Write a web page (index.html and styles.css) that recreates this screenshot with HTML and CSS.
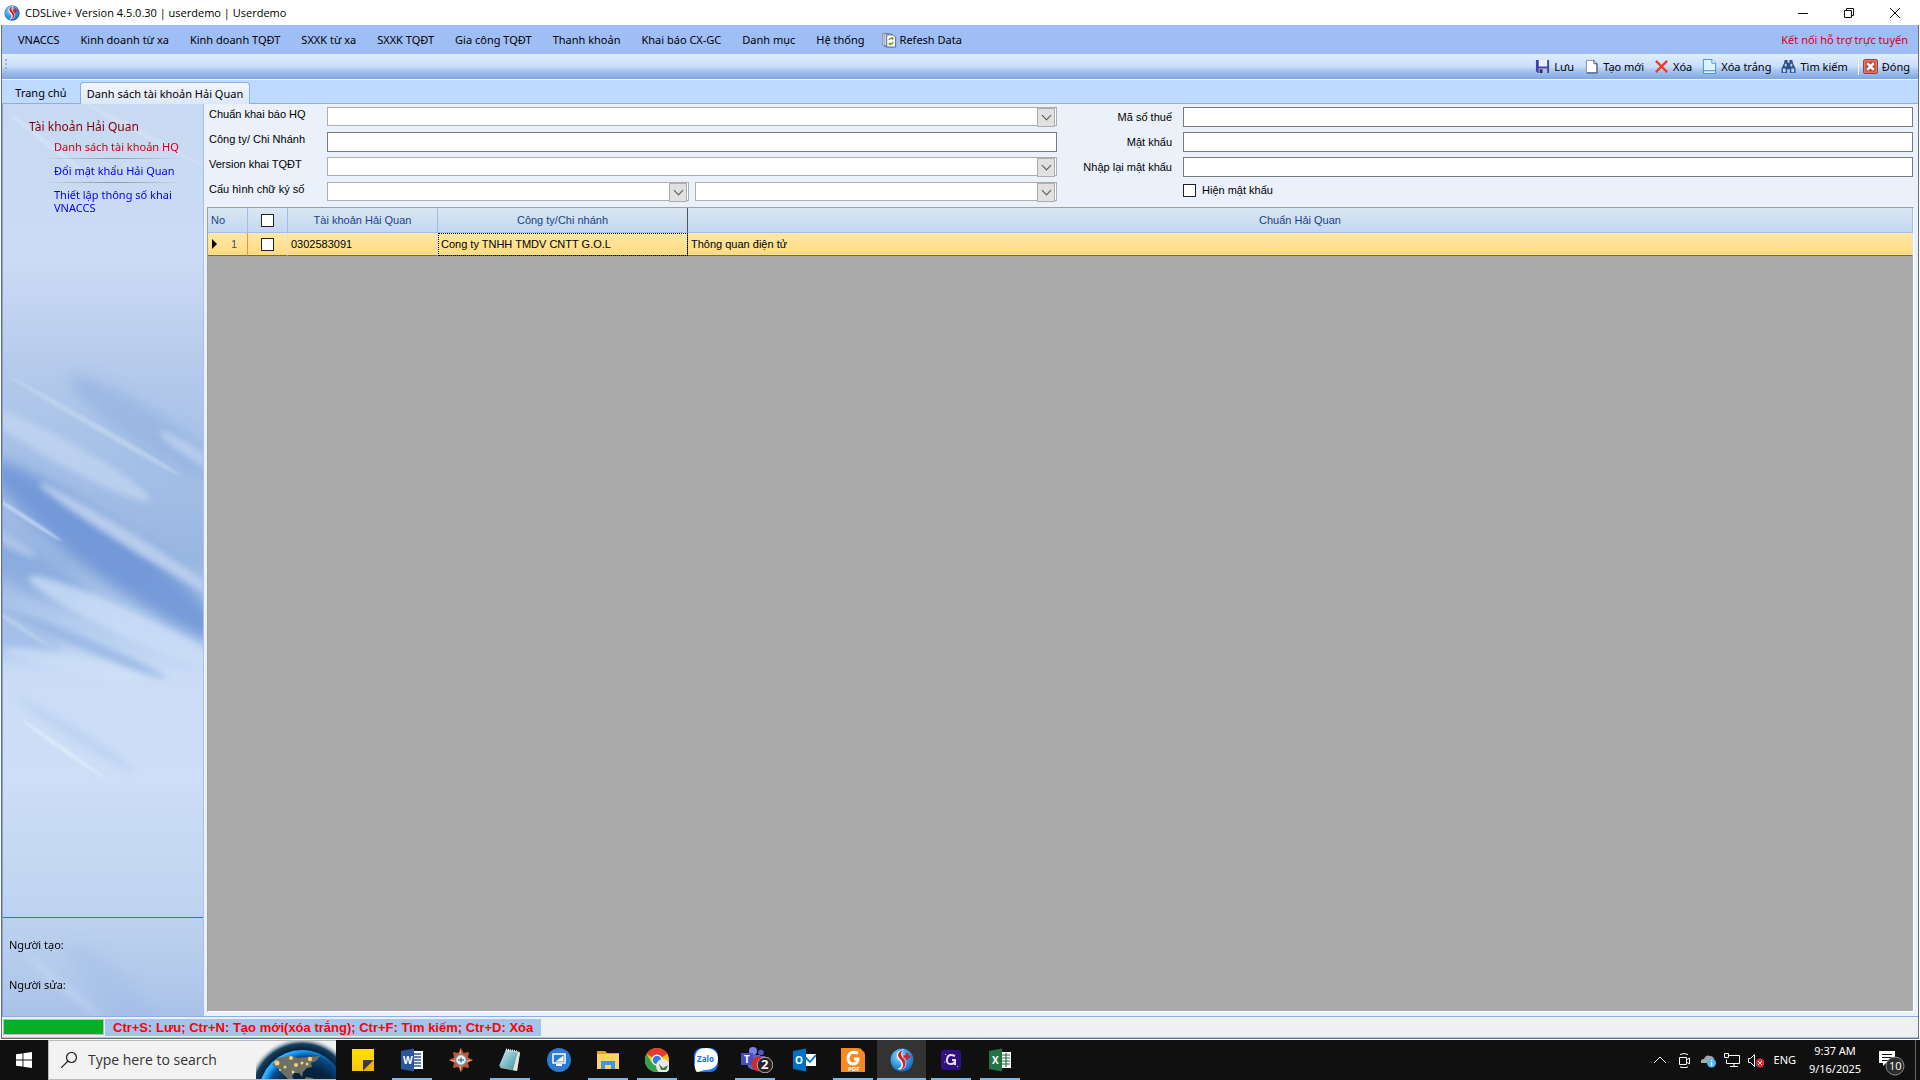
FILE: index.html
```html
<!DOCTYPE html>
<html lang="vi">
<head>
<meta charset="utf-8">
<title>CDSLive+ Version 4.5.0.30</title>
<link rel="stylesheet" href="styles.css">
</head>
<body>
<svg class="defs" aria-hidden="true">
  <defs>
    <radialGradient id="logoBlue" cx=".4" cy=".35" r=".7"><stop offset="0" stop-color="#9bdcf8"/><stop offset=".6" stop-color="#2e97dd"/><stop offset="1" stop-color="#145fae"/></radialGradient>
    <linearGradient id="glass" x1="0" y1="0" x2="1" y2="1"><stop offset="0" stop-color="#d7f1f2"/><stop offset="1" stop-color="#2f8fa3"/></linearGradient>
    <linearGradient id="sticky" x1="0" y1="0" x2="0" y2="1"><stop offset="0" stop-color="#ffe000"/><stop offset="1" stop-color="#fdc80f"/></linearGradient>
    <symbol id="logo" viewBox="0 0 24 24">
      <circle cx="12" cy="12" r="11.5" fill="url(#logoBlue)"/>
      <path d="M14 1C6 3 5 8 9 12c4 4 3 8-2 9 8 2 11-4 8-9-3-4-4-7-1-11z" fill="#fff"/>
      <path d="M13 2C7 4 7 8 10 11c4 4 4 8 0 11 6-2 7-7 4-11-3-3-4-6-1-9z" fill="#d3202e"/>
      <path d="M17 5v7M13.500 8.500h7" stroke="#d3202e" stroke-width="2.400"/>
    </symbol>
  </defs>
</svg>
<div class="app">
  <header class="titlebar">
    <svg class="icon16"><use href="#logo"/></svg>
    <h1>CDSLive+ Version 4.5.0.30 | userdemo | Userdemo</h1>
    <div class="winbtns">
      <button aria-label="Minimize"><svg viewBox="0 0 12 12"><path d="M1 6.500h10" /></svg></button>
      <button aria-label="Restore"><svg viewBox="0 0 12 12"><path d="M1.500 3.500h7v7h-7zM3.500 3.500v-2h7v7h-2"/></svg></button>
      <button aria-label="Close"><svg viewBox="0 0 12 12"><path d="M1 1l10 10M11 1L1 11"/></svg></button>
    </div>
  </header>
  <div class="frame">
    <nav class="menu">
      <button>VNACCS</button><button>Kinh doanh từ xa</button><button>Kinh doanh TQĐT</button><button>SXXK từ xa</button><button>SXXK TQĐT</button><button>Gia công TQĐT</button><button>Thanh khoản</button><button>Khai báo CX-GC</button><button>Danh mục</button><button>Hệ thống</button>
      <button class="refresh"><svg viewBox="0 0 16 16"><path d="M1 1h6v13H1zM3 1.500h7V15H3z" fill="#eef1f6" stroke="#65758d" stroke-width=".8"/><path d="M5 2.500h7l2.500 2.500v10.500H5z" fill="#fff" stroke="#4e617c"/><path d="M7.500 8q1-2.500 4-1.500M12 10q-1 3-4 2" fill="none" stroke="#6aa21a" stroke-width="1.500"/><path d="M10.500 4.500l2.500 2-2.500 2zM9 10l-2.500 2L9 14z" fill="#6aa21a"/></svg>Refesh Data</button>
      <a class="support" href="#">Kết nối hỗ trợ trực tuyến</a>
    </nav>
    <div class="toolbar">
      <span class="grip"></span>
      <button><svg viewBox="0 0 16 16"><path d="M1 1h14v14H3l-2-2z" fill="#3c45ad"/><path d="M4 1h9v7H4z" fill="#e9effb"/><path d="M4 10h9v5H4z" fill="#b9bfd0"/><path d="M5 11h3v4H5z" fill="#24295f"/></svg>Lưu</button>
      <button><svg viewBox="0 0 16 16"><path d="M2.500 1.500h8l3 3v10h-11z" fill="#fff" stroke="#7e8fab"/><path d="M10.500 1v4h3.500v10H3" fill="none" stroke="#42536e"/></svg>Tạo mới</button>
      <button><svg viewBox="0 0 16 16"><path d="M2 2l12 12M14 2L2 14" stroke="#ef3a24" stroke-width="2.400"/></svg>Xóa</button>
      <button><svg viewBox="0 0 16 16"><path d="M1.500.500h9l4 4v11h-13z" fill="#dff1fd" stroke="#3d8fd1"/><path d="M10.500.500v4h4" fill="#fff" stroke="#3d8fd1"/><path d="M1.500 12.500h13" stroke="#2b86cf"/></svg>Xóa trắng</button>
      <button><svg viewBox="0 0 16 16"><path d="M4 1h3v3h2V1h3l1 4 2.500 5v5h-6v-4h-3v4h-6v-5L3 5z" fill="#2e4f86"/><path d="M2 10h3v4H2zM11 10h3v4h-3zM4 5h2v3H4zM10 5h2v3h-2z" fill="#c1d5f2"/></svg>Tìm kiếm</button>
      <span class="sep"></span>
      <button><svg viewBox="0 0 16 16"><rect x=".500" y=".500" width="15" height="15" rx="2" fill="#c8452f" stroke="#8c3b35"/><rect x="2" y="2" width="12" height="12" fill="none" stroke="#e79a8b"/><path d="M4.500 4.500l7 7M11.500 4.500l-7 7" stroke="#fff" stroke-width="2.600"/></svg>Đóng</button>
    </div>
    <div class="tabs" role="tablist">
      <button role="tab">Trang chủ</button>
      <button role="tab" class="active" aria-selected="true">Danh sách tài khoản Hải Quan</button>
    </div>
    <div class="work">
      <aside class="side">
        <svg class="streaks" viewBox="0 0 200 912" preserveAspectRatio="none" aria-hidden="true">
          <defs>
            <linearGradient id="sky" x1="0" y1="0" x2="0" y2="1"><stop offset="0" stop-color="#c8d9f2"/><stop offset=".17" stop-color="#cadbf4"/><stop offset=".28" stop-color="#b7cbec"/><stop offset=".36" stop-color="#a9c3e8"/><stop offset=".5" stop-color="#98b6e2"/><stop offset=".57" stop-color="#b4ccee"/><stop offset=".63" stop-color="#cbddf6"/><stop offset=".74" stop-color="#cddef6"/><stop offset=".87" stop-color="#c0d5f0"/><stop offset=".96" stop-color="#b3c9eb"/><stop offset="1" stop-color="#a9c2e8"/></linearGradient>
            <filter id="soft" filterUnits="userSpaceOnUse" x="-80" y="-80" width="360" height="1080"><feGaussianBlur stdDeviation="7"/></filter>
            <filter id="mid" filterUnits="userSpaceOnUse" x="-80" y="-80" width="360" height="1080"><feGaussianBlur stdDeviation="3"/></filter>
            <filter id="fine" filterUnits="userSpaceOnUse" x="-80" y="-80" width="360" height="1080"><feGaussianBlur stdDeviation="1"/></filter>
          </defs>
          <rect width="200" height="912" fill="url(#sky)"/>
          <g filter="url(#soft)">
            <ellipse cx="145" cy="325" rx="95" ry="18" transform="rotate(33 145 325)" fill="#8fafe0" opacity=".6"/>
            <ellipse cx="105" cy="448" rx="150" ry="24" transform="rotate(37 105 448)" fill="#6d93d6" opacity=".85"/>
            <ellipse cx="20" cy="465" rx="70" ry="18" transform="rotate(25 20 465)" fill="#84a7dd" opacity=".7"/>
            <ellipse cx="0" cy="530" rx="60" ry="16" transform="rotate(15 0 530)" fill="#9ab8e5" opacity=".7"/>
            <ellipse cx="110" cy="885" rx="60" ry="18" transform="rotate(45 110 885)" fill="#98b5e5" opacity=".3"/>
          </g>
          <g filter="url(#mid)">
            <ellipse cx="60" cy="348" rx="100" ry="12" transform="rotate(29 60 348)" fill="#c3d5f1" opacity=".75"/>
            <ellipse cx="125" cy="520" rx="110" ry="13" transform="rotate(25 125 520)" fill="#cbddf6" opacity=".8"/>
            <ellipse cx="80" cy="539" rx="90" ry="6" transform="rotate(23 80 539)" fill="#8dade0" opacity=".65"/>
            <ellipse cx="70" cy="560" rx="70" ry="8" transform="rotate(12 70 560)" fill="#d1e2f8" opacity=".6"/>
            <ellipse cx="125" cy="435" rx="105" ry="7" transform="rotate(32 125 435)" fill="#bfd2f0" opacity=".9"/>
            <ellipse cx="188" cy="348" rx="38" ry="6" transform="rotate(33 188 348)" fill="#bed1ef" opacity=".8"/>
            <ellipse cx="72" cy="630" rx="68" ry="6" transform="rotate(32 72 630)" fill="#b7cff0" opacity=".65"/>
            <ellipse cx="5" cy="437" rx="32" ry="5" transform="rotate(30 5 437)" fill="#c1d4f2" opacity=".6"/>
            <ellipse cx="60" cy="882" rx="50" ry="4" transform="rotate(40 60 882)" fill="#c9dbf6" opacity=".5"/>
          </g>
          <g filter="url(#fine)">
            <ellipse cx="92" cy="322" rx="98" ry="3" transform="rotate(30 92 322)" fill="#c3d5f1" opacity=".7"/>
            <ellipse cx="20" cy="412" rx="46" ry="2" transform="rotate(33 20 412)" fill="#c7daf4" opacity=".8"/>
            <ellipse cx="60" cy="645" rx="50" ry="2" transform="rotate(35 60 645)" fill="#e0edfa" opacity=".8"/>
            <ellipse cx="20" cy="525" rx="40" ry="2" transform="rotate(33 20 525)" fill="#bcd1f0" opacity=".7"/>
            <ellipse cx="45" cy="40" rx="50" ry="2" transform="rotate(38 45 40)" fill="#dde9f9" opacity=".6"/>
            <ellipse cx="140" cy="30" rx="70" ry="3" transform="rotate(28 140 30)" fill="#d8e5f8" opacity=".5"/>
          </g>
        </svg>
        <nav class="sidenav">
          <h2>Tài khoản Hải Quan</h2>
          <a class="current" href="#">Danh sách tài khoản HQ</a>
          <a href="#">Đổi mật khẩu Hải Quan</a>
          <a href="#">Thiết lập thông số khai VNACCS</a>
        </nav>
        <div class="audit"><p>Người tạo:</p><p>Người sửa:</p></div>
      </aside>
      <main class="main">
        <form class="form">
          <label for="std">Chuẩn khai báo HQ</label><span class="combo"><select id="std"></select></span>
          <label class="r" for="tax">Mã số thuế</label><input id="tax" type="text">
          <label for="com">Công ty/ Chi Nhánh</label><input id="com" type="text">
          <label class="r" for="pw">Mật khẩu</label><input id="pw" type="password">
          <label for="ver">Version khai TQĐT</label><span class="combo"><select id="ver"></select></span>
          <label class="r" for="pw2">Nhập lại mật khẩu</label><input id="pw2" type="password">
          <label for="sig">Cấu hình chữ ký số</label>
          <div class="pair"><span class="combo"><select id="sig"></select></span><span class="combo"><select aria-label="Chữ ký số"></select></span></div>
          <label class="check"><input type="checkbox">Hiện mật khẩu</label>
        </form>
        <div class="grid">
          <table>
            <colgroup><col class="c-no"><col class="c-chk"><col class="c-acc"><col class="c-com"><col></colgroup>
            <thead><tr><th class="no">No</th><th><input type="checkbox" aria-label="Chọn tất cả"></th><th>Tài khoản Hải Quan</th><th>Công ty/Chi nhánh</th><th>Chuẩn Hải Quan</th></tr></thead>
            <tbody><tr><td class="rowhead"><span><i></i>1</span></td><td class="chk"><input type="checkbox" aria-label="Chọn dòng 1"></td><td>0302583091</td><td class="focus">Cong ty TNHH TMDV CNTT G.O.L</td><td>Thông quan điện tử</td></tr></tbody>
          </table>
        </div>
      </main>
    </div>
    <footer class="status"><div class="progress"></div><strong>Ctr+S: Lưu; Ctr+N: Tạo mới(xóa trắng); Ctr+F: Tìm kiếm; Ctr+D: Xóa</strong></footer>
  </div>
</div>
<div class="taskbar">
  <button class="start" aria-label="Start"><svg viewBox="0 0 16 16"><path d="M0 2.300L6.500 1.400V7.600H0zM7.400 1.300L16 0v7.600H7.400zM0 8.400h6.500v6.200L0 13.700zM7.400 8.400H16V16l-8.600-1.200z" fill="#fff"/></svg></button>
  <div class="search">
    <svg class="lens" viewBox="0 0 16 16"><circle cx="10.500" cy="5.500" r="5" fill="none" stroke="#222" stroke-width="1.200"/><path d="M7 9L0 16" stroke="#222" stroke-width="1.200"/></svg>
    <input type="text" placeholder="Type here to search" aria-label="Type here to search">
    <svg class="earth" viewBox="0 0 80 38"><defs><radialGradient id="halo" gradientUnits="userSpaceOnUse" cx="46" cy="52" r="56"><stop offset=".78" stop-color="#05233b"/><stop offset=".88" stop-color="#16405f"/><stop offset="1" stop-color="#f2f2f2" stop-opacity="0"/></radialGradient><radialGradient id="sea" gradientUnits="userSpaceOnUse" cx="52" cy="56" r="48"><stop offset=".6" stop-color="#06243d"/><stop offset=".85" stop-color="#0a4c8c"/><stop offset=".95" stop-color="#1496f5"/><stop offset="1" stop-color="#32b0ff"/></radialGradient></defs>
      <circle cx="46" cy="52" r="56" fill="url(#halo)"/><circle cx="46" cy="52" r="43" fill="url(#sea)"/>
      <path d="M16 24l6-7 12-2 8 2 9-1 13-1-4 5-5 2 1 4-5 1-4 4-1 5-3-4h-5l-2 4 3 3-5 1-5-5-5-5-3-4z" fill="#6d7062"/><path d="M50 36l6 1 4 2H48z" fill="#6d7062"/>
      <g fill="#f8cf7b"><circle cx="21" cy="22" r="2.500"/><circle cx="35" cy="17" r="2"/><circle cx="29" cy="26" r="1.500"/><circle cx="40" cy="24" r="2"/><circle cx="46" cy="22" r="1.500"/><circle cx="54" cy="18" r="2.200"/><circle cx="51" cy="23" r="1.500"/><circle cx="37" cy="31" r="1.500"/><circle cx="24" cy="29" r="1"/></g></svg>
  </div>
  <div class="apps">
    <button aria-label="Sticky Notes"><svg viewBox="0 0 24 24"><path d="M1 1h22v22H1z" fill="url(#sticky)"/><path d="M12 23V12h11z" fill="#3e3c3a"/><path d="M12 23l11-11v11z" fill="#efb20b"/></svg></button>
    <button class="open" aria-label="Word"><svg viewBox="0 0 24 24"><path d="M12 3h11v18H12z" fill="#fff"/><path d="M14 6h7M14 9h7M14 12h7M14 15h7M14 18h7" stroke="#2b579a" stroke-width="1.300"/><path d="M1 3l13-2.500v23L1 21z" fill="#2b579a"/><text x="3" y="16" class="g10">W</text></svg></button>
    <button aria-label="Compass"><svg viewBox="0 0 24 24"><path d="M12 0l2.500 5L20 4l-1 5.500 5 2.500-5 2.500 1 5.500-5.500-1L12 24l-2.500-5L4 20l1-5.500L0 12l5-2.500L4 4l5.500 1z" fill="#c9552e"/><path d="M12 0v24l-2-6.500V7zM0 12h24l-7 2.500H7z" fill="#f0c27a" opacity=".8"/><circle cx="12" cy="12" r="5.500" fill="#e8eef2" stroke="#7d8a94" stroke-width="1.500"/><path d="M9 12h6M12 9.500v5" stroke="#4f7fa0" stroke-width="1.500"/></svg></button>
    <button class="open" aria-label="Notepad"><svg viewBox="0 0 24 24"><path d="M9 2l13 2-3 19-17-3z" fill="#b8a88e"/><path d="M8 1.500l12 2-5 18.500L1 18z" fill="url(#glass)"/><path d="M20 3.500L22 5l-3 18-4-1z" fill="#e6e3da"/><path d="M8 1.500l12 2" stroke="#eee" stroke-dasharray="1 1" stroke-width="2"/></svg></button>
    <button aria-label="UltraViewer"><svg viewBox="0 0 24 24"><circle cx="12" cy="12" r="12" fill="#2b7ad3"/><path d="M6 6h12v9H6z" fill="none" stroke="#fff" stroke-width="1.500"/><path d="M16.500 7.500v6h-8zM9 16h6v2H9z" fill="#fff"/></svg></button>
    <button class="open" aria-label="File Explorer"><svg viewBox="0 0 24 24"><path d="M1 3h8l2 2h12v16H1z" fill="#e8a317"/><path d="M1 6h22v15H1z" fill="#fcd462"/><path d="M5 13h14v8h-4v-4H9v4H5z" fill="#3a9ae0"/></svg></button>
    <button class="open" aria-label="Chrome"><svg viewBox="0 0 24 24"><circle cx="12" cy="12" r="12" fill="#fbc116"/><path d="M12 12L1.600 6A12 12 0 0 1 22.400 6z" fill="#e33b2e"/><path d="M1.600 6A12 12 0 0 0 12 24l5-9H7z" fill="#31a350"/><circle cx="12" cy="12" r="5.500" fill="#fff"/><circle cx="12" cy="12" r="4.300" fill="#2e7de9"/><circle cx="18" cy="18" r="7" fill="#e7e7e7"/><path d="M14 16l4 4 5-3-2 5h-5z" fill="#3c7a48"/></svg></button>
    <button aria-label="Zalo"><svg viewBox="0 0 24 24"><rect width="24" height="24" rx="8" fill="#1a78ff"/><path d="M3 24Q0 22 1 12C1 3 5 0 12 0s12 4 12 11-5 11-12 11c-4 0-6 2-9 2z" fill="#fff"/><text x="3" y="14" class="zalo">Zalo</text></svg></button>
    <button class="open" aria-label="Teams"><svg class="wide" viewBox="0 0 32 26"><circle cx="12" cy="4" r="4" fill="#7b83eb"/><circle cx="20" cy="5.500" r="2.800" fill="#5059c9"/><path d="M7 8h12v12q-6 6-12 0zM19 9h5v8q-2 4-5 3z" fill="#5b62c8"/><path d="M0 6h12v12H0z" fill="#464eb8"/><text x="3" y="16" class="g10">T</text><circle cx="18" cy="17" r="7.500" fill="#d12a2a"/><circle cx="24" cy="18" r="7.800" fill="#2c2423" stroke="#a9a9a9"/><text x="20" y="22" class="g12">2</text></svg></button>
    <button aria-label="Outlook"><svg viewBox="0 0 24 24"><path d="M12 6h12v12H12z" fill="#fff"/><path d="M13 9l5 5 6-7" fill="none" stroke="#0072c6" stroke-width="1.800"/><path d="M1 3l13-2.500v23L1 21z" fill="#0072c6"/><text x="3" y="16" class="g10">O</text></svg></button>
    <button class="open" aria-label="Foxit PDF"><svg viewBox="0 0 24 24"><path d="M0 0h18l6 6v18H0z" fill="#f7891f"/><path d="M19 0v5h5z" fill="#f7891f"/><path d="M17 5q-9-3-10 5 0 6 6 6 4-1 4-5h-4" fill="none" stroke="#fff" stroke-width="3"/><text x="7" y="23" class="g6">PDF</text></svg></button>
    <button class="open current" aria-label="CDSLive+"><svg><use href="#logo"/></svg></button>
    <button class="open" aria-label="Capture"><svg viewBox="0 0 24 24"><rect x="2" y="2" width="20" height="20" rx="3" fill="#321081"/><path d="M16 8q-7-3-8 3-1 5 4 5 4 0 4-4h-3M16 12v5" fill="none" stroke="#e9def9" stroke-width="2"/><path d="M6 6l1 1M5 14h1M18 18l1 1" stroke="#c6a8ff"/></svg></button>
    <button class="open" aria-label="Excel"><svg viewBox="0 0 24 24"><path d="M12 4h11v16H12z" fill="#fff"/><path d="M14 7h8M14 10h8M14 13h8M14 16h8M18 5v14" stroke="#217346" stroke-width="1.200"/><path d="M1 3l13-2.500v23L1 21z" fill="#217346"/><text x="4" y="16" class="g10">X</text></svg></button>
  </div>
  <div class="tray">
    <svg viewBox="0 0 16 16"><path d="M2 11l6-6 6 6"/></svg>
    <svg viewBox="0 0 16 16"><path d="M3.500 5.500h7v7h-7zM10.500 8l3-2v6l-3-2M4 2.500q4-2 8 0M4 15q4 1.500 8 0"/></svg>
    <svg viewBox="0 0 16 16"><path d="M1 11Q0 7 4 7q2-5 6-3 4 0 4 4v3z" fill="#a9a9a9" stroke="none"/><circle cx="11.500" cy="11" r="4.500" fill="#4cb7f0" stroke="none"/><path d="M11.500 10v4M11.500 8v1" stroke-width="1.500"/></svg>
    <svg viewBox="0 0 16 16"><path d="M4.500 3.500h11v8H2.500v-4M10 12v2.500M6 14.500h8M.500 1.500h4v4h-4z"/></svg>
    <svg viewBox="0 0 16 16"><path d="M.500 6.500h2l4-4v12l-4-4h-2z"/><circle cx="12" cy="11" r="4.500" fill="#e02b35" stroke="none"/><path d="M10 9l4 4M14 9l-4 4"/></svg>
    <span class="lang">ENG</span>
    <div class="clock"><span>9:37 AM</span><span>9/16/2025</span></div>
    <button class="notify" aria-label="Notifications"><svg viewBox="0 0 26 26"><path d="M0 1h16v12h-9l-3 3v-3H0z" fill="#fff" stroke="none"/><path d="M3 4.500h10M3 7.500h10M3 10.500h6" stroke="#111"/><circle cx="16" cy="16" r="9" fill="#2d2d2d" stroke="#8b8b8b"/><text x="10" y="20" class="g11">10</text></svg></button>
  </div>
</div>
</body>
</html>
```
FILE: styles.css
```css
* { box-sizing: border-box; }
html, body { height: 100%; }
body { margin: 0; display: flex; flex-direction: column; overflow: hidden; background: #fff; color: #000; font: 11px/14px "Noto Sans", sans-serif; }
h1, h2, p { margin: 0; font-weight: 400; font-size: 11px; }
button { border: 0; padding: 0; background: none; font: inherit; color: inherit; display: flex; align-items: center; }
a { text-decoration: none; color: inherit; }
.defs { position: absolute; width: 0; height: 0; }
.icon16 { width: 16px; height: 16px; }

.app { flex: 1; min-height: 0; display: flex; flex-direction: column; margin-bottom: 1px; }
.titlebar { height: 25px; display: flex; align-items: center; gap: 5px; padding-left: 4px; }
.titlebar h1 { flex: 1; font-family: "Open Sans", sans-serif; }
.winbtns { display: flex; padding-right: 2px; }
.winbtns button { width: 46px; height: 24px; justify-content: center; }
.winbtns svg { width: 12px; height: 12px; fill: none; stroke: #111; }

.frame { flex: 1; min-height: 0; display: flex; flex-direction: column; margin: 0 1px; border: 1px solid #667082; border-top: 0; }
.menu { height: 29px; display: flex; align-items: center; gap: 21px; padding: 0 10px 0 16px; background: #9fbef5; }
.menu .refresh { gap: 3px; margin-left: -4px; }
.refresh svg { width: 15px; height: 16px; }
.support { margin-left: auto; color: #d00010; }
.toolbar { height: 26px; display: flex; align-items: center; justify-content: flex-end; gap: 10px; padding: 0 8px 0 3px; background: linear-gradient(#e0edfd, #c8defa 50%, #b0cbf2 62%, #82a9e3 96%); border-bottom: 1px solid #eef5ff; }
.toolbar button { gap: 4px; }
.toolbar svg { width: 15px; height: 15px; }
.grip { width: 2px; height: 15px; margin-right: auto; background: repeating-linear-gradient(#a9b4c6 0 2px, transparent 2px 4px); }
.sep { width: 1px; height: 17px; background: #f1f5fb; margin-right: -6px; }
.tabs { height: 24px; display: flex; align-items: flex-end; background: #bedaff; border-bottom: 1px solid #8caee0; }
.tabs button { height: 21px; justify-content: center; width: 78px; }
.tabs .active { width: 170px; height: 22px; margin-bottom: -1px; background: linear-gradient(#f3f7fd, #dce8f8); border: 1px solid #8caee0; border-bottom: 0; border-radius: 4px 4px 0 0; }

.work { flex: 1; min-height: 0; display: flex; border-bottom: 1px solid #8caee0; border-left: 1px solid #7fa5e0; }
.side { position: relative; width: 201px; display: flex; flex-direction: column; justify-content: space-between; border-right: 1px solid #a4c2ec; }
.streaks { position: absolute; inset: 0; width: 100%; height: 100%; }
.sidenav, .audit { position: relative; }
.sidenav { padding: 16px 10px 0 26px; }
.sidenav h2 { color: #800000; font-size: 12px; line-height: 14px; }
.sidenav a { display: block; padding: 6px 0 5px 25px; line-height: 13px; color: #0000f0; background: linear-gradient(90deg, transparent, #8b97a8 50%, transparent) 14px 0 / 140px 1px no-repeat; }
.sidenav a.current { color: #d00010; background: none; }
.audit { height: 99px; padding: 20px 6px 0; border-top: 1px solid #2f6fc9; }
.audit p { line-height: 14px; margin-bottom: 26px; }
.main { flex: 1; min-width: 0; display: flex; flex-direction: column; background: #eaf1fb; font: 11px/14px "Liberation Sans", sans-serif; }

.form { display: grid; grid-template-columns: 118px minmax(0, 1fr) 126px minmax(0, 1fr); grid-auto-rows: 20px; row-gap: 5px; padding: 3px 5px 5px; }
.form .r { line-height: 20px; text-align: right; padding-right: 11px; }
.form input[type=text], .form input[type=password] { width: 100%; height: 20px; border: 1px solid #7a7a7a; background: #fff; padding: 0 3px; font: inherit; }
.combo { position: relative; display: block; height: 19px; flex: 1; }
.combo select { appearance: none; width: 100%; height: 19px; display: block; border: 1px solid #adadad; border-radius: 0; background: #fff; font: inherit; }
.combo::before { content: ""; position: absolute; right: 2px; top: 1px; width: 16px; height: 17px; background: #e1e1e1; border: 1px solid #adadad; pointer-events: none; }
.combo::after { content: ""; position: absolute; right: 7px; top: 5px; width: 6px; height: 6px; border: solid #555; border-width: 0 1px 1px 0; transform: rotate(45deg); pointer-events: none; }
.pair { display: flex; gap: 6px; }
input[type=checkbox] { appearance: none; width: 13px; height: 13px; margin: 0; border: 1px solid #222; background: #fff; vertical-align: middle; }
.check { grid-column: 4; display: flex; align-items: center; gap: 6px; height: 16px; }

.grid { flex: 1; margin: 0 4px 4px 3px; background: #ababab; border: 1px solid #a0a0a0; border-right-color: #fff; border-bottom-color: #fff; }
table { width: 100%; border-collapse: separate; border-spacing: 0; table-layout: fixed; }
.c-no { width: 40px; } .c-chk { width: 40px; } .c-acc { width: 150px; } .c-com { width: 250px; }
th { height: 25px; padding: 0; font-weight: 400; color: #1c4187; background: linear-gradient(#dbe7f3, #c2d7f0); border-right: 1px solid #9dbfea; border-bottom: 1px solid #9dbfea; }
th:nth-child(4), td:nth-child(4) { border-right-color: #555; }
th.no { text-align: left; padding-left: 3px; }
td { height: 23px; padding: 0 3px; background: linear-gradient(#ffe8a6, #ffdb80); border-right: 1px solid #dcdfe4; border-bottom: 1px solid #696969; }
td.chk { text-align: center; }
td.focus { outline: 1px dotted #000; outline-offset: -1px; }
.rowhead { color: #44546a; border-right-color: #f0903c; }
.rowhead span { display: flex; align-items: center; justify-content: space-between; padding: 0 7px 0 1px; }
.rowhead i { border: solid transparent; border-width: 5px 0 5px 5px; border-left-color: #000; }

.status { height: 21px; display: flex; align-items: center; gap: 1px; padding: 0 1px; background: #f0f0f0; border-bottom: 1px solid #a9c4ee; }
.progress { width: 101px; height: 16px; background: #06b025; border: 1px solid #bcbcbc; }
.status strong { height: 17px; padding: 0 8px; background: #a5c3ed; color: #f00; font: bold 13px/18px "Liberation Sans", sans-serif; }

.taskbar { height: 40px; flex: none; display: flex; background: #101010; color: #fff; }
.start { width: 48px; justify-content: center; }
.start svg { width: 16px; height: 16px; }
.search { position: relative; width: 288px; display: flex; align-items: center; gap: 11px; padding-left: 12px; background: #f2f2f2; border: 1px solid #b8b8b8; border-right: 0; }
.lens { width: 16px; height: 16px; }
.search input { flex: 1; min-width: 0; border: 0; background: none; padding: 0; font: 14px/20px "Open Sans", sans-serif; }
.search input::placeholder { color: #333; opacity: 1; }
.earth { width: 80px; height: 38px; }
.apps { display: flex; padding-left: 2px; }
.apps button { width: 49px; height: 40px; justify-content: center; }
.apps svg { width: 24px; height: 24px; }
.apps .wide { width: 32px; height: 26px; margin-left: 5px; }
.apps .open { background: linear-gradient(#76b9ed, #76b9ed) 50% 100% / 40px 2px no-repeat; }
.apps .current { background-color: #333; background-size: 100% 2px; }
.g6, .g10, .g11, .g12 { fill: #fff; font-family: "Open Sans", sans-serif; font-weight: 700; stroke: none; }
.g6 { font-size: 6px; } .g10 { font-size: 10px; } .g11 { font-size: 11px; font-weight: 400; } .g12 { font-size: 13px; }
.zalo { fill: #0f6dff; font: bold 8px "Open Sans", sans-serif; }
.tray { margin-left: auto; display: flex; align-items: center; gap: 8px; padding-right: 4px; }
.tray svg { width: 16px; height: 16px; fill: none; stroke: #fff; }
.lang { padding-left: 2px; }
.clock { display: flex; flex-direction: column; width: 62px; text-align: center; line-height: 18px; }
.notify { width: 42px; height: 40px; padding: 6px 0 0 5px; border-right: 1px solid #666; }
.tray .notify svg { width: 26px; height: 26px; }
```
